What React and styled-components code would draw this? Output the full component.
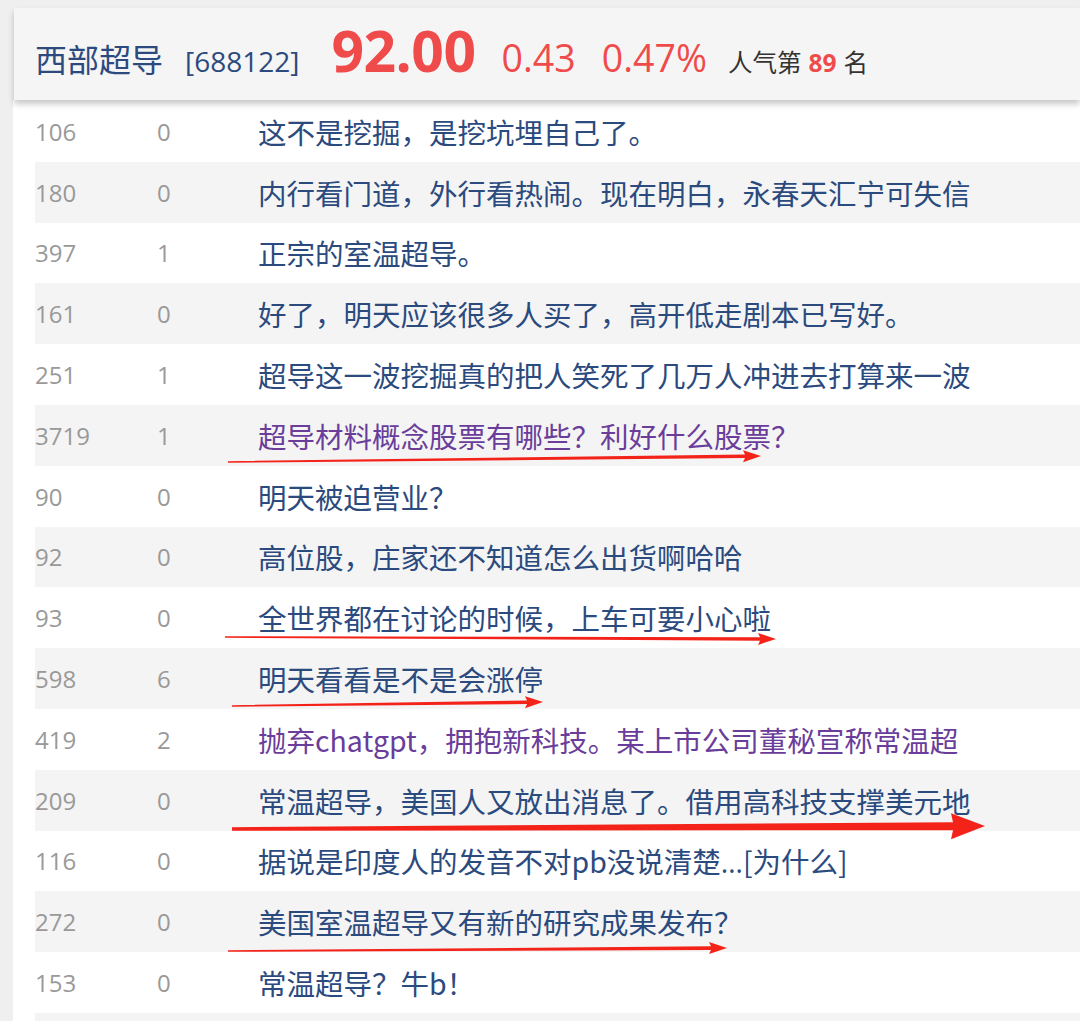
import React from 'react'
import styled, { createGlobalStyle } from 'styled-components'

const GlobalStyle = createGlobalStyle`
    html, body {
        margin: 0;
        padding: 0;
        background: #efefef;
    }
    body {
        font-family: "Open Sans", "Noto Sans", "Noto Sans CJK SC", sans-serif;
    }
`;

const Page = styled.div`
    width: 1080px;
    height: 1021px;
    overflow: hidden;
    padding: 8px 0 0 14px;
    box-sizing: border-box;
    background: #efefef;
`;

const Header = styled.div`
    position: relative;
    z-index: 2;
    height: 92px;
    display: flex;
    align-items: baseline;
    padding: 3px 0 0 21px;
    box-sizing: border-box;
    background: #f5f5f5;
    box-shadow: 0 4px 6px rgba(0, 0, 0, 0.22);
`;

const StockName = styled.span`
    font-family: "Noto Sans CJK SC", sans-serif;
    font-size: 32px;
    color: #2c4a7e;
`;

const StockCode = styled.span`
    font-size: 28px;
    color: #2c4a7e;
    margin-left: 22px;
`;

const Price = styled.span`
    font-size: 57px;
    font-weight: 700;
    color: #f04b4b;
    margin-left: 32px;
    letter-spacing: -0.5px;
`;

const Change = styled.span`
    font-size: 37.5px;
    color: #f04b4b;
    margin-left: 26px;
`;

const Rank = styled.span`
    font-family: "Noto Sans CJK SC", sans-serif;
    font-size: 24.5px;
    color: #333;
    margin-left: 21px;

    b {
        font-family: "Open Sans", sans-serif;
        color: #f04b4b;
        font-weight: 700;
        margin: 0 7px;
    }
`;

const List = styled.div`
    background: #fff;
    margin-left: -1px;
    padding: 1px 0 0 22px;
    height: 940px;
`;

const Row = styled.div`
    position: relative;
    height: 60.8px;
    display: grid;
    grid-template-columns: 122px 101px 1fr;
    align-items: center;
    background: ${props => (props.$odd ? '#f4f4f4' : '#fff')};
`;

const Num = styled.span`
    font-size: 24px;
    color: #999;
`;

const Title = styled.span`
    font-family: "Noto Sans CJK SC", sans-serif;
    font-size: 28.5px;
    color: ${props => (props.$visited ? '#6a3d9a' : '#2b4a7e')};
    white-space: nowrap;
`;

const Dots = styled.span`
    font-family: "Open Sans", sans-serif;
`;

const Mark = styled.svg`
    position: absolute;
    left: 0;
    top: 0;
    width: 100%;
    height: 100%;
    overflow: visible;
    z-index: 1;
    pointer-events: none;
`;

// hand drawn red arrow under a title, coordinates relative to row
const Arrow = ({ x1, y1, x2, y2, t = 1.8, h = 6, len = 16 }) => {
    const bx = x2 - len;
    const by = y1 + ((y2 - y1) * (bx - x1)) / (x2 - x1);
    const pts = [
        [x1, y1 - t * 0.45],
        [bx, by - t],
        [bx - 2, by - h],
        [x2, y2],
        [bx - 2, by + h],
        [bx, by + t],
        [x1, y1 + t * 0.45],
    ]
    return (
        <Mark>
            <polygon points={pts.map(p => p.join(',')).join(' ')} fill="#f4231a" />
        </Mark>
    )
}

const rows = [
    { a: '106', b: '0', t: '这不是挖掘，是挖坑埋自己了。' },
    { a: '180', b: '0', t: '内行看门道，外行看热闹。现在明白，永春天汇宁可失信' },
    { a: '397', b: '1', t: '正宗的室温超导。' },
    { a: '161', b: '0', t: '好了，明天应该很多人买了，高开低走剧本已写好。' },
    { a: '251', b: '1', t: '超导这一波挖掘真的把人笑死了几万人冲进去打算来一波' },
    { a: '3719', b: '1', t: '超导材料概念股票有哪些？利好什么股票？', v: true, arrow: { x1: 193, y1: 57, x2: 726, y2: 51 } },
    { a: '90', b: '0', t: '明天被迫营业？' },
    { a: '92', b: '0', t: '高位股，庄家还不知道怎么出货啊哈哈' },
    { a: '93', b: '0', t: '全世界都在讨论的时候，上车可要小心啦', arrow: { x1: 190, y1: 50, x2: 741, y2: 52 } },
    { a: '598', b: '6', t: '明天看看是不是会涨停', arrow: { x1: 197, y1: 58, x2: 508, y2: 54 } },
    { a: '419', b: '2', t: '抛弃chatgpt，拥抱新科技。某上市公司董秘宣称常温超', v: true },
    { a: '209', b: '0', t: '常温超导，美国人又放出消息了。借用高科技支撑美元地', arrow: { x1: 197, y1: 59, x2: 950, y2: 56, t: 4, h: 13, len: 32 } },
    { a: '116', b: '0', t: <>据说是印度人的发音不对pb没说清楚<Dots>…</Dots>[为什么]</> },
    { a: '272', b: '0', t: '美国室温超导又有新的研究成果发布？', arrow: { x1: 193, y1: 60, x2: 692, y2: 57 } },
    { a: '153', b: '0', t: '常温超导？牛b！' },
    { a: '', b: '', t: '' },
]

const App = () => {
    return (
        <Page>
            <GlobalStyle />
            <Header>
                <StockName>西部超导</StockName>
                <StockCode>[688122]</StockCode>
                <Price>92.00</Price>
                <Change>0.43</Change>
                <Change>0.47%</Change>
                <Rank>人气第<b>89</b>名</Rank>
            </Header>
            <List>
                {rows.map((r, i) => (
                    <Row key={i} $odd={i % 2 === 1}>
                        <Num>{r.a}</Num>
                        <Num>{r.b}</Num>
                        <Title $visited={r.v}>{r.t}</Title>
                        {r.arrow && <Arrow {...r.arrow} />}
                    </Row>
                ))}
            </List>
        </Page>
    )
}

export default App
